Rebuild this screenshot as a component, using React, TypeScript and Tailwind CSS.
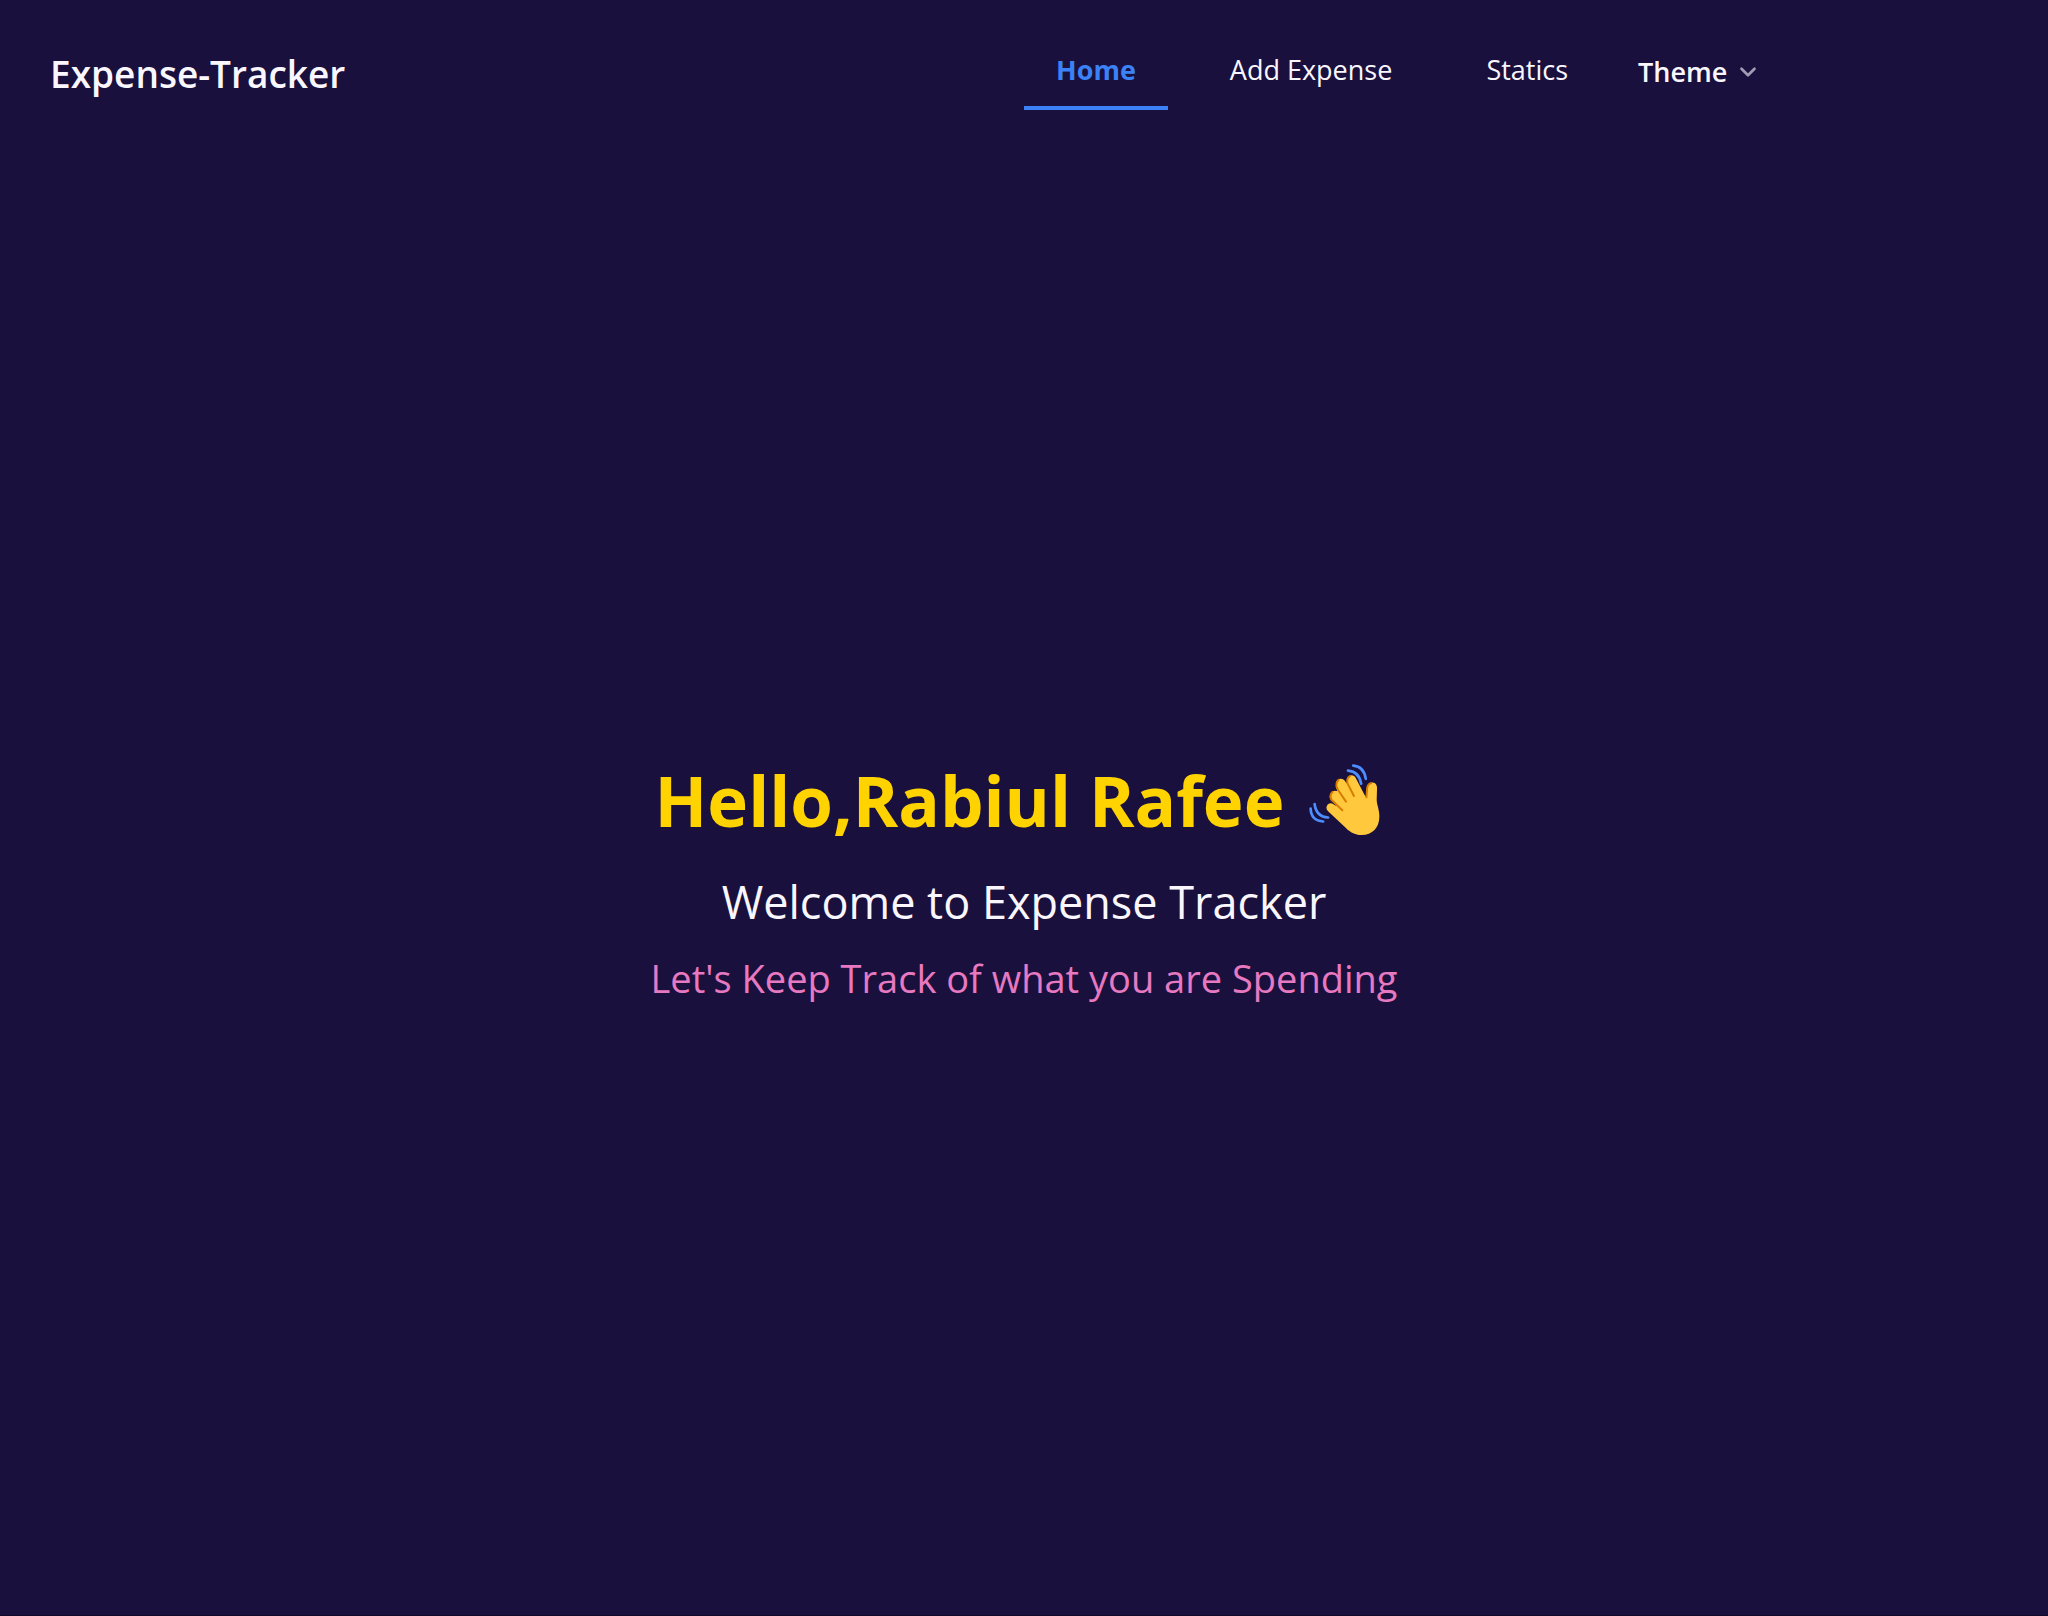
import { ChevronDown } from "lucide-react";

function WavingHand() {
  return (
    <svg viewBox="54 40 219 221" className="size-[73px]" role="img" aria-label="Waving hand">
      <path
        fill="#ffc83d"
        d="M110 170 C114 161 124 160 131 166 L144 173 L122 152 C116 144 119 130 128 126 C135 122 142 125 147 131 L170 158 L140 111 C135 102 139 90 150 88 C157 87 162 90 166 96 L193 141 L172 98 C168 88 174 78 184 77 C191 77 195 81 198 86 L229 146 L234 109 C236 101 241 98 249 99 C258 100 262 107 262 115 L261 152 C261 165 269 181 269 202 C269 236 248 258 215 258 C192 258 175 245 163 232 L117 189 C110 183 107 176 110 170 Z"
      />
      <path fill="#ffc83d" d="M126 146 L150 110 L180 95 L232 146 L225 190 L150 190 Z" />
      <g fill="none" stroke="#d67d00" strokeLinecap="round" strokeLinejoin="round" strokeWidth="6">
        <path d="M157 183 L124 151 Q117 138 127 128" />
        <path d="M168 157 L141 117 Q135 101 146 91" />
        <path d="M192 140 L172 100 Q170 85 180 80" />
        <path d="M230 144 L232 116 Q234 102 244 101" />
      </g>
      <g fill="none" stroke="#4c8dff" strokeLinecap="round" strokeWidth="8">
        <path d="M174 63 Q208 66 214 103" />
        <path d="M190 48 Q222 50 228 88" />
        <path d="M73 164 Q78 203 114 205" />
        <path d="M61 178 Q62 215 99 217" />
      </g>
    </svg>
  );
}

const tabs = [
  { label: "Home", active: true },
  { label: "Add Expense", active: false },
  { label: "Statics", active: false },
];

export default function App() {
  return (
    <div className="flex min-h-screen flex-col border-b border-[#110a2b] bg-[#1a103d] font-['Open_Sans','Noto_Sans',sans-serif] text-[#f9f7fd]">
      <header className="flex items-start pt-8">
        <div className="w-1/2 pl-[50px]">
          <a href="#home" className="block pt-4 text-[37px] leading-[52px] font-semibold">
            Expense-Tracker
          </a>
        </div>
        <nav className="flex w-1/2 items-start gap-[30px]" aria-label="Main">
          {tabs.map((tab) => (
            <a
              key={tab.label}
              href={`#${tab.label.toLowerCase().replace(" ", "-")}`}
              aria-current={tab.active ? "page" : undefined}
              className={
                tab.active
                  ? "border-b-4 border-[#3b82f6] px-8 pt-[19px] pb-[17px] text-[27px] leading-[38px] font-bold text-[#3b82f6]"
                  : "border-b-4 border-transparent px-8 pt-[19px] pb-[17px] text-[27px] leading-[38px]"
              }
            >
              {tab.label}
            </a>
          ))}
          <button type="button" className="ml-2 flex items-center gap-2 pt-[21px] text-[27px] leading-[38px] font-semibold">
            Theme
            <ChevronDown className="size-[26px] text-[#a19bb4]" strokeWidth={2.5} />
          </button>
        </nav>
      </header>
      <main className="flex flex-1 flex-col items-center justify-center pt-8 text-center">
        <h1 className="flex items-center gap-6 pr-3 text-[69px] leading-[96px] font-bold text-[#ffd300]">
          Hello,Rabiul Rafee
          <WavingHand />
        </h1>
        <p className="mt-[22px] text-[45px] leading-[64px]">Welcome to Expense Tracker</p>
        <p className="mt-4 text-[38px] leading-[56px] text-[#e779c1]">Let's Keep Track of what you are Spending</p>
      </main>
    </div>
  );
}
